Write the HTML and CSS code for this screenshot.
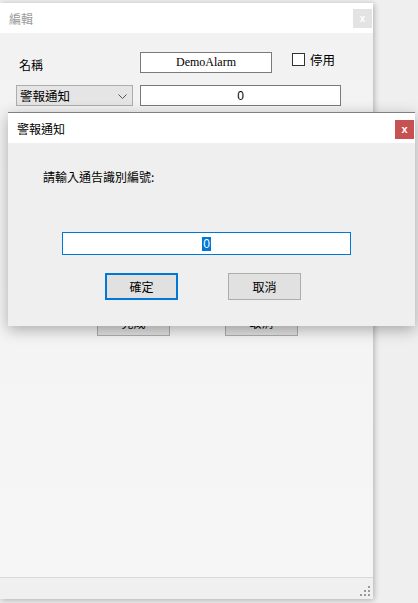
FILE: index.html
```html
<!DOCTYPE html>
<html lang="zh-Hant">
<head>
<meta charset="utf-8">
<title>編輯</title>
<link rel="stylesheet" href="styles.css">
</head>
<body>
<div class="win">
  <div class="win-title">
    <span class="win-caption">編輯</span>
    <span class="win-close">x</span>
  </div>
  <div class="win-body">
    <div class="row row-name">
      <span class="lbl">名稱</span>
      <div class="field field-name">DemoAlarm</div>
      <label class="chk"><span class="box"></span>停用</label>
    </div>
    <div class="row row-type">
      <div class="select">
        <span>警報通知</span>
        <svg class="chev" width="9" height="5" viewBox="0 0 9 5"><path d="M0.5 0.5 L4.5 4.5 L8.5 0.5" fill="none" stroke="#555" stroke-width="1"/></svg>
      </div>
      <div class="field field-num">0</div>
    </div>
    <div class="row row-btns">
      <div class="btn">完成</div>
      <div class="btn">取消</div>
    </div>
  </div>
  <div class="status">
    <svg class="grip" width="10" height="10" viewBox="0 0 10 10" fill="#9a9a9a">
      <rect x="8" y="0" width="2" height="2"/>
      <rect x="4" y="4" width="2" height="2"/><rect x="8" y="4" width="2" height="2"/>
      <rect x="0" y="8" width="2" height="2"/><rect x="4" y="8" width="2" height="2"/><rect x="8" y="8" width="2" height="2"/>
    </svg>
  </div>
</div>

<div class="dlg">
  <div class="dlg-title">
    <span class="dlg-caption">警報通知</span>
    <span class="dlg-close">x</span>
  </div>
  <div class="dlg-body">
    <div class="dlg-msg">請輸入通告識別編號:</div>
    <div class="dlg-input"><span class="sel">0</span></div>
    <div class="dlg-btns">
      <div class="dbtn dbtn-ok">確定</div>
      <div class="dbtn">取消</div>
    </div>
  </div>
</div>
</body>
</html>
```
FILE: styles.css
```css
* { box-sizing: border-box; }
html, body { margin: 0; padding: 0; }
body {
  background: #efefef;
  font-family: "Noto Sans CJK TC", "Noto Sans", sans-serif;
  font-size: 12px;
  color: #000;
  width: 418px;
  height: 603px;
  overflow: hidden;
  position: relative;
}
.win {
  margin-top: 3px;
  width: 373px;
  height: 596px;
  background: #f4f4f4;
  box-shadow: 1px 1px 6px rgba(0,0,0,0.28);
  display: flex;
  flex-direction: column;
}
.win-title {
  height: 30px;
  background: #fff;
  display: flex;
  align-items: center;
  justify-content: space-between;
  padding: 0 1px 0 9px;
}
.win-caption { color: #9a9a9a; font-size: 12px; }
.win-close {
  width: 19px;
  height: 19px;
  background: #e3e3e3;
  color: #fff;
  font-family: "Liberation Sans", sans-serif;
  font-weight: bold;
  font-size: 10px;
  display: flex;
  align-items: center;
  justify-content: center;
}
.win-body {
  flex: 1;
  padding: 19px 0 0 16px;
  display: flex;
  flex-direction: column;
  background: linear-gradient(#f2f2f2, #f6f6f6);
}
.row { display: flex; align-items: center; }
.row-name { height: 21px; }
.lbl { width: 124px; padding-left: 3px; padding-top: 3px; }
.field {
  height: 21px;
  background: #fff;
  border: 1px solid #7a7a7a;
  display: flex;
  align-items: center;
  justify-content: center;
}
.field-name {
  width: 132px;
  font-family: "Liberation Serif", serif;
  font-size: 12px;
}
.chk { display: flex; align-items: center; margin-left: 20px; margin-top: -6px; font-size: 12.5px; }
.box { width: 13px; height: 13px; border: 1px solid #333; background: #fff; margin-right: 5px; }
.row-type { margin-top: 12px; height: 21px; gap: 7px; }
.select {
  width: 117px;
  height: 21px;
  background: #e5e5e5;
  border: 1px solid #adadad;
  display: flex;
  align-items: center;
  justify-content: space-between;
  padding: 0 5px 0 3px;
  font-size: 12.5px;
}
.chev { margin-top: 1px; }
.field-num { width: 201px; font-family: "Liberation Sans", sans-serif; }
.row-btns { margin-top: 203px; gap: 55px; padding-left: 81px; }
.btn {
  width: 73px;
  height: 27px;
  background: #e1e1e1;
  border: 1px solid #adadad;
  display: flex;
  align-items: center;
  justify-content: center;
  font-size: 12px;
}
.status {
  height: 22px;
  border-top: 1px solid #d9d9d9;
  background: #f0f0f0;
  display: flex;
  justify-content: flex-end;
  align-items: flex-end;
  padding: 0 3px 3px 0;
}

.dlg {
  position: absolute;
  left: 8px;
  top: 112px;
  width: 407px;
  height: 214px;
  background: #efefef;
  border-top: 1px solid #808080;
  box-shadow: 0 4px 14px rgba(0,0,0,0.3);
  display: flex;
  flex-direction: column;
}
.dlg-title {
  height: 30px;
  background: #fff;
  display: flex;
  align-items: center;
  justify-content: space-between;
  padding: 0 1px 0 9px;
}
.dlg-caption { font-size: 12px; }
.dlg-close {
  width: 19px;
  height: 19px;
  background: #c75050;
  color: #fff;
  font-family: "Liberation Sans", sans-serif;
  font-weight: bold;
  font-size: 11px;
  display: flex;
  align-items: center;
  justify-content: center;
  margin-top: 2px;
}
.dlg-body {
  flex: 1;
  display: flex;
  flex-direction: column;
  padding: 25px 0 0 35px;
}
.dlg-msg { font-size: 12px; line-height: 18px; }
.dlg-input {
  margin: 46px 0 0 19px;
  width: 289px;
  height: 23px;
  background: #fff;
  border: 1px solid #0078d7;
  display: flex;
  align-items: center;
  justify-content: center;
  font-family: "Liberation Sans", sans-serif;
  font-size: 12px;
}
.sel { background: #0078d7; color: #fff; padding: 0 1px; line-height: 14px; }
.dlg-btns { display: flex; gap: 50px; margin: 18px 0 0 62px; }
.dbtn {
  width: 73px;
  height: 27px;
  background: #e1e1e1;
  border: 1px solid #adadad;
  display: flex;
  align-items: center;
  justify-content: center;
  font-size: 12px;
}
.dbtn-ok { border: 2px solid #0078d7; }
```
